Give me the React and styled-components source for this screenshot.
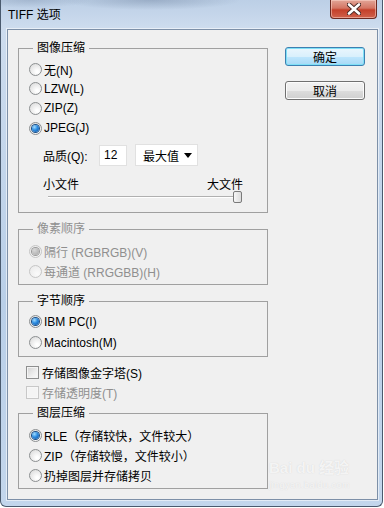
import React from "react";
import styled, { createGlobalStyle } from "styled-components";

const GlobalStyle = createGlobalStyle`
  html, body {
    margin: 0;
    padding: 0;
    background: #ffffff;
  }
  body {
    font-family: "Liberation Sans", "Noto Sans CJK SC", sans-serif;
    font-size: 12px;
    color: #000;
  }
`;

const Window = styled.div`
  position: relative;
  width: 383px;
  height: 507px;
  box-sizing: border-box;
  border: 1px solid #4a5a6e;
  border-top: none;
  border-radius: 0 0 6px 6px;
  padding: 0 4px 0 6px;
  background:
    radial-gradient(ellipse 90px 10px at 150px 0, rgba(90, 110, 140, 0.35), transparent),
    radial-gradient(ellipse 60px 8px at 30px 0, rgba(90, 110, 140, 0.25), transparent),
    linear-gradient(180deg, #bccfe6 0, #cddcee 28px, #b9cfe8 60%, #c3d6ec 100%);
  display: flex;
  flex-direction: column;
`;

const TitleBar = styled.div`
  height: 29px;
  display: flex;
  justify-content: space-between;
  align-items: flex-start;
`;

const Title = styled.div`
  padding: 8px 0 0 1px;
  font-size: 12px;
  line-height: 14px;
  color: #000;
`;

const CloseButton = styled.div`
  width: 47px;
  height: 19px;
  margin-right: 1px;
  box-sizing: border-box;
  border: 1px solid #6b2a22;
  border-top: none;
  border-radius: 0 0 4px 4px;
  background: linear-gradient(180deg, #e2a597 0, #d47563 45%, #c4402a 55%, #d0624c 100%);
  box-shadow: inset 0 0 0 1px rgba(255, 220, 210, 0.5);
  display: flex;
  align-items: center;
  justify-content: center;
`;

const Client = styled.div`
  height: 471px;
  box-sizing: border-box;
  border: 1px solid #7d90a8;
  box-shadow: 0 0 0 1px rgba(255, 255, 255, 0.55);
  background: #f0f0f0;
  padding: 11px 0 0 10px;
  display: flex;
  gap: 17px;
  align-items: flex-start;
`;

const LeftColumn = styled.div`
  width: 250px;
  display: flex;
  flex-direction: column;
`;

const RightColumn = styled.div`
  margin-top: 6px;
  width: 80px;
  display: flex;
  flex-direction: column;
  gap: 15px;
`;

const Group = styled.fieldset`
  margin: ${(p) => p.$top || 0}px 0 0 0;
  width: 250px;
  box-sizing: border-box;
  min-width: 0;
  border: 1px solid #a0a0a0;
  padding: ${(p) => p.$pt}px 10px ${(p) => p.$pb}px 10px;
`;

const Legend = styled.legend`
  margin-left: 4px;
  padding: 0 4px;
  font-size: 12px;
  line-height: 14px;
  color: ${(p) => (p.$disabled ? "#8f8f8f" : "#000")};
`;

const Row = styled.label`
  height: ${(p) => p.$h || 20}px;
  display: flex;
  align-items: center;
  white-space: nowrap;
  color: ${(p) => (p.$disabled ? "#8f8f8f" : "#000")};
`;

const CheckGroup = styled.div`
  margin-top: 5px;
`;

const RadioDot = styled.span`
  width: 13px;
  height: 13px;
  box-sizing: border-box;
  margin-right: 2px;
  border-radius: 50%;
  border: 1px solid ${(p) => (p.$disabled ? "#c6c6c6" : "#8c8f91")};
  background: ${(p) =>
    p.$disabled
      ? "radial-gradient(circle at 65% 70%, #fafafa, #e8e8e8)"
      : "radial-gradient(circle at 65% 70%, #ffffff 10%, #d6d6d6 100%)"};
  display: flex;
  align-items: center;
  justify-content: center;
  flex-shrink: 0;

  &::after {
    content: "";
    display: ${(p) => (p.$checked ? "block" : "none")};
    width: 7px;
    height: 7px;
    border-radius: 50%;
    background: ${(p) =>
      p.$disabled
        ? "radial-gradient(circle at 35% 30%, #d8d8d8, #a6a6a6)"
        : "radial-gradient(circle at 35% 30%, #9fdcff 0, #2c8be0 45%, #0a4f9e 100%)"};
    box-shadow: 0 0 0 1px ${(p) => (p.$disabled ? "#9a9a9a" : "#1c4f86")};
  }
`;

const CheckBox = styled.span`
  width: 13px;
  height: 13px;
  box-sizing: border-box;
  margin: 0 3px 0 8px;
  border: 1px solid ${(p) => (p.$disabled ? "#c8c8c8" : "#8e8f8f")};
  background: ${(p) =>
    p.$disabled
      ? "#f4f4f4"
      : "linear-gradient(135deg, #d2d2d2 0, #eeeeee 60%, #fbfbfb 100%)"};
  box-shadow: inset 0 0 0 1px ${(p) => (p.$disabled ? "#f7f7f7" : "#f4f4f4")};
  flex-shrink: 0;
`;

const QualityRow = styled.div`
  margin-top: 6px;
  height: 22px;
  display: flex;
  align-items: center;
`;

const FieldLabel = styled.span`
  width: 56px;
  margin-left: 14px;
`;

const NumberBox = styled.div`
  width: 28px;
  height: 21px;
  box-sizing: border-box;
  border: 1px solid #e1e1e1;
  background: #fff;
  padding-left: 4px;
  line-height: 19px;
`;

const Select = styled.div`
  margin-left: 8px;
  width: 63px;
  height: 22px;
  box-sizing: border-box;
  border: 1px solid #e1e1e1;
  background: #fff;
  padding: 0 5px 0 7px;
  display: flex;
  align-items: center;
  justify-content: space-between;

  &::after {
    content: "";
    border-left: 4px solid transparent;
    border-right: 4px solid transparent;
    border-top: 5px solid #000;
    margin-top: 1px;
  }
`;

const SizeLabels = styled.div`
  margin: 10px 0 0 14px;
  width: 200px;
  height: 15px;
  display: flex;
  justify-content: space-between;
  align-items: center;
`;

const Slider = styled.div`
  position: relative;
  margin-left: 19px;
  width: 194px;
  height: 12px;

  &::before {
    content: "";
    position: absolute;
    left: 0;
    right: 2px;
    top: 5px;
    height: 1px;
    background: #b0b0b0;
    border-bottom: 1px solid #ffffff;
  }
`;

const Thumb = styled.span`
  position: absolute;
  right: 0;
  top: 0;
  width: 9px;
  height: 12px;
  box-sizing: border-box;
  border: 1px solid #7a7a7a;
  border-radius: 2px;
  background: linear-gradient(90deg, #f6f6f6, #dcdcdc);
`;

const Button = styled.div`
  height: 19px;
  box-sizing: border-box;
  border-radius: 3px;
  border: 1px solid ${(p) => (p.$default ? "#3c7fb1" : "#707070")};
  background: ${(p) =>
    p.$default
      ? "linear-gradient(180deg, #eaf6fd 0, #d9f0fc 50%, #bee6fd 51%, #a7d9f5 100%)"
      : "linear-gradient(180deg, #f2f2f2 0, #ebebeb 50%, #dddddd 51%, #cfcfcf 100%)"};
  box-shadow: inset 0 0 0 1px ${(p) => (p.$default ? "#7fe0f6" : "#fcfcfc")};
  display: flex;
  align-items: center;
  justify-content: center;
  font-size: 12px;
`;

const Watermark = styled.div`
  position: absolute;
  left: 268px;
  top: 459px;
  color: rgba(255, 255, 255, 0.75);
  text-shadow: 0 0 1px rgba(170, 170, 170, 0.45);
  font-family: "Liberation Sans", "Noto Sans CJK SC", sans-serif;
  font-weight: bold;
  font-size: 15px;
  line-height: 18px;
  white-space: nowrap;
  pointer-events: none;

  small {
    display: block;
    margin-top: 3px;
    font-size: 9px;
    line-height: 11px;
    font-weight: normal;
    letter-spacing: 0.5px;
  }
`;

const Radio = ({ checked, disabled, h, children }) => (
  <Row $h={h} $disabled={disabled}>
    <RadioDot $checked={checked} $disabled={disabled} />
    {children}
  </Row>
);

const Check = ({ disabled, children }) => (
  <Row $disabled={disabled}>
    <CheckBox $disabled={disabled} />
    {children}
  </Row>
);

const App = () => {
  return (
    <>
      <GlobalStyle />
      <Window>
        <TitleBar>
          <Title>TIFF 选项</Title>
          <CloseButton>
            <svg width="14" height="12" viewBox="0 0 14 12">
              <path d="M2 1.5 L12 10.5 M12 1.5 L2 10.5" stroke="#4a2a26" strokeWidth="4.5" strokeLinecap="round" />
              <path d="M2 1.5 L12 10.5 M12 1.5 L2 10.5" stroke="#ffffff" strokeWidth="2.6" strokeLinecap="round" />
            </svg>
          </CloseButton>
        </TitleBar>
        <Client>
          <LeftColumn>
            <Group $pt={4} $pb={9}>
              <Legend>图像压缩</Legend>
              <Radio>无(N)</Radio>
              <Radio h={19}>LZW(L)</Radio>
              <Radio>ZIP(Z)</Radio>
              <Radio checked>JPEG(J)</Radio>
              <QualityRow>
                <FieldLabel>品质(Q):</FieldLabel>
                <NumberBox>12</NumberBox>
                <Select>最大值</Select>
              </QualityRow>
              <SizeLabels>
                <span>小文件</span>
                <span>大文件</span>
              </SizeLabels>
              <Slider>
                <Thumb />
              </Slider>
            </Group>

            <Group $top={9} $pt={5} $pb={3}>
              <Legend $disabled>像素顺序</Legend>
              <Radio checked disabled>隔行 (RGBRGB)(V)</Radio>
              <Radio disabled>每通道 (RRGGBB)(H)</Radio>
            </Group>

            <Group $top={9} $pt={3} $pb={3}>
              <Legend>字节顺序</Legend>
              <Radio checked h={21}>IBM PC(I)</Radio>
              <Radio h={21}>Macintosh(M)</Radio>
            </Group>

            <CheckGroup>
              <Check>存储图像金字塔(S)</Check>
              <Check disabled>存储透明度(T)</Check>
            </CheckGroup>

            <Group $top={4} $pt={5} $pb={3}>
              <Legend>图层压缩</Legend>
              <Radio checked>RLE（存储较快，文件较大）</Radio>
              <Radio>ZIP（存储较慢，文件较小）</Radio>
              <Radio>扔掉图层并存储拷贝</Radio>
            </Group>
          </LeftColumn>

          <RightColumn>
            <Button $default>确定</Button>
            <Button>取消</Button>
          </RightColumn>
        </Client>
        <Watermark>
          Bai du 经验
          <small>jingyan.baidu.com</small>
        </Watermark>
      </Window>
    </>
  );
};

export default App;
